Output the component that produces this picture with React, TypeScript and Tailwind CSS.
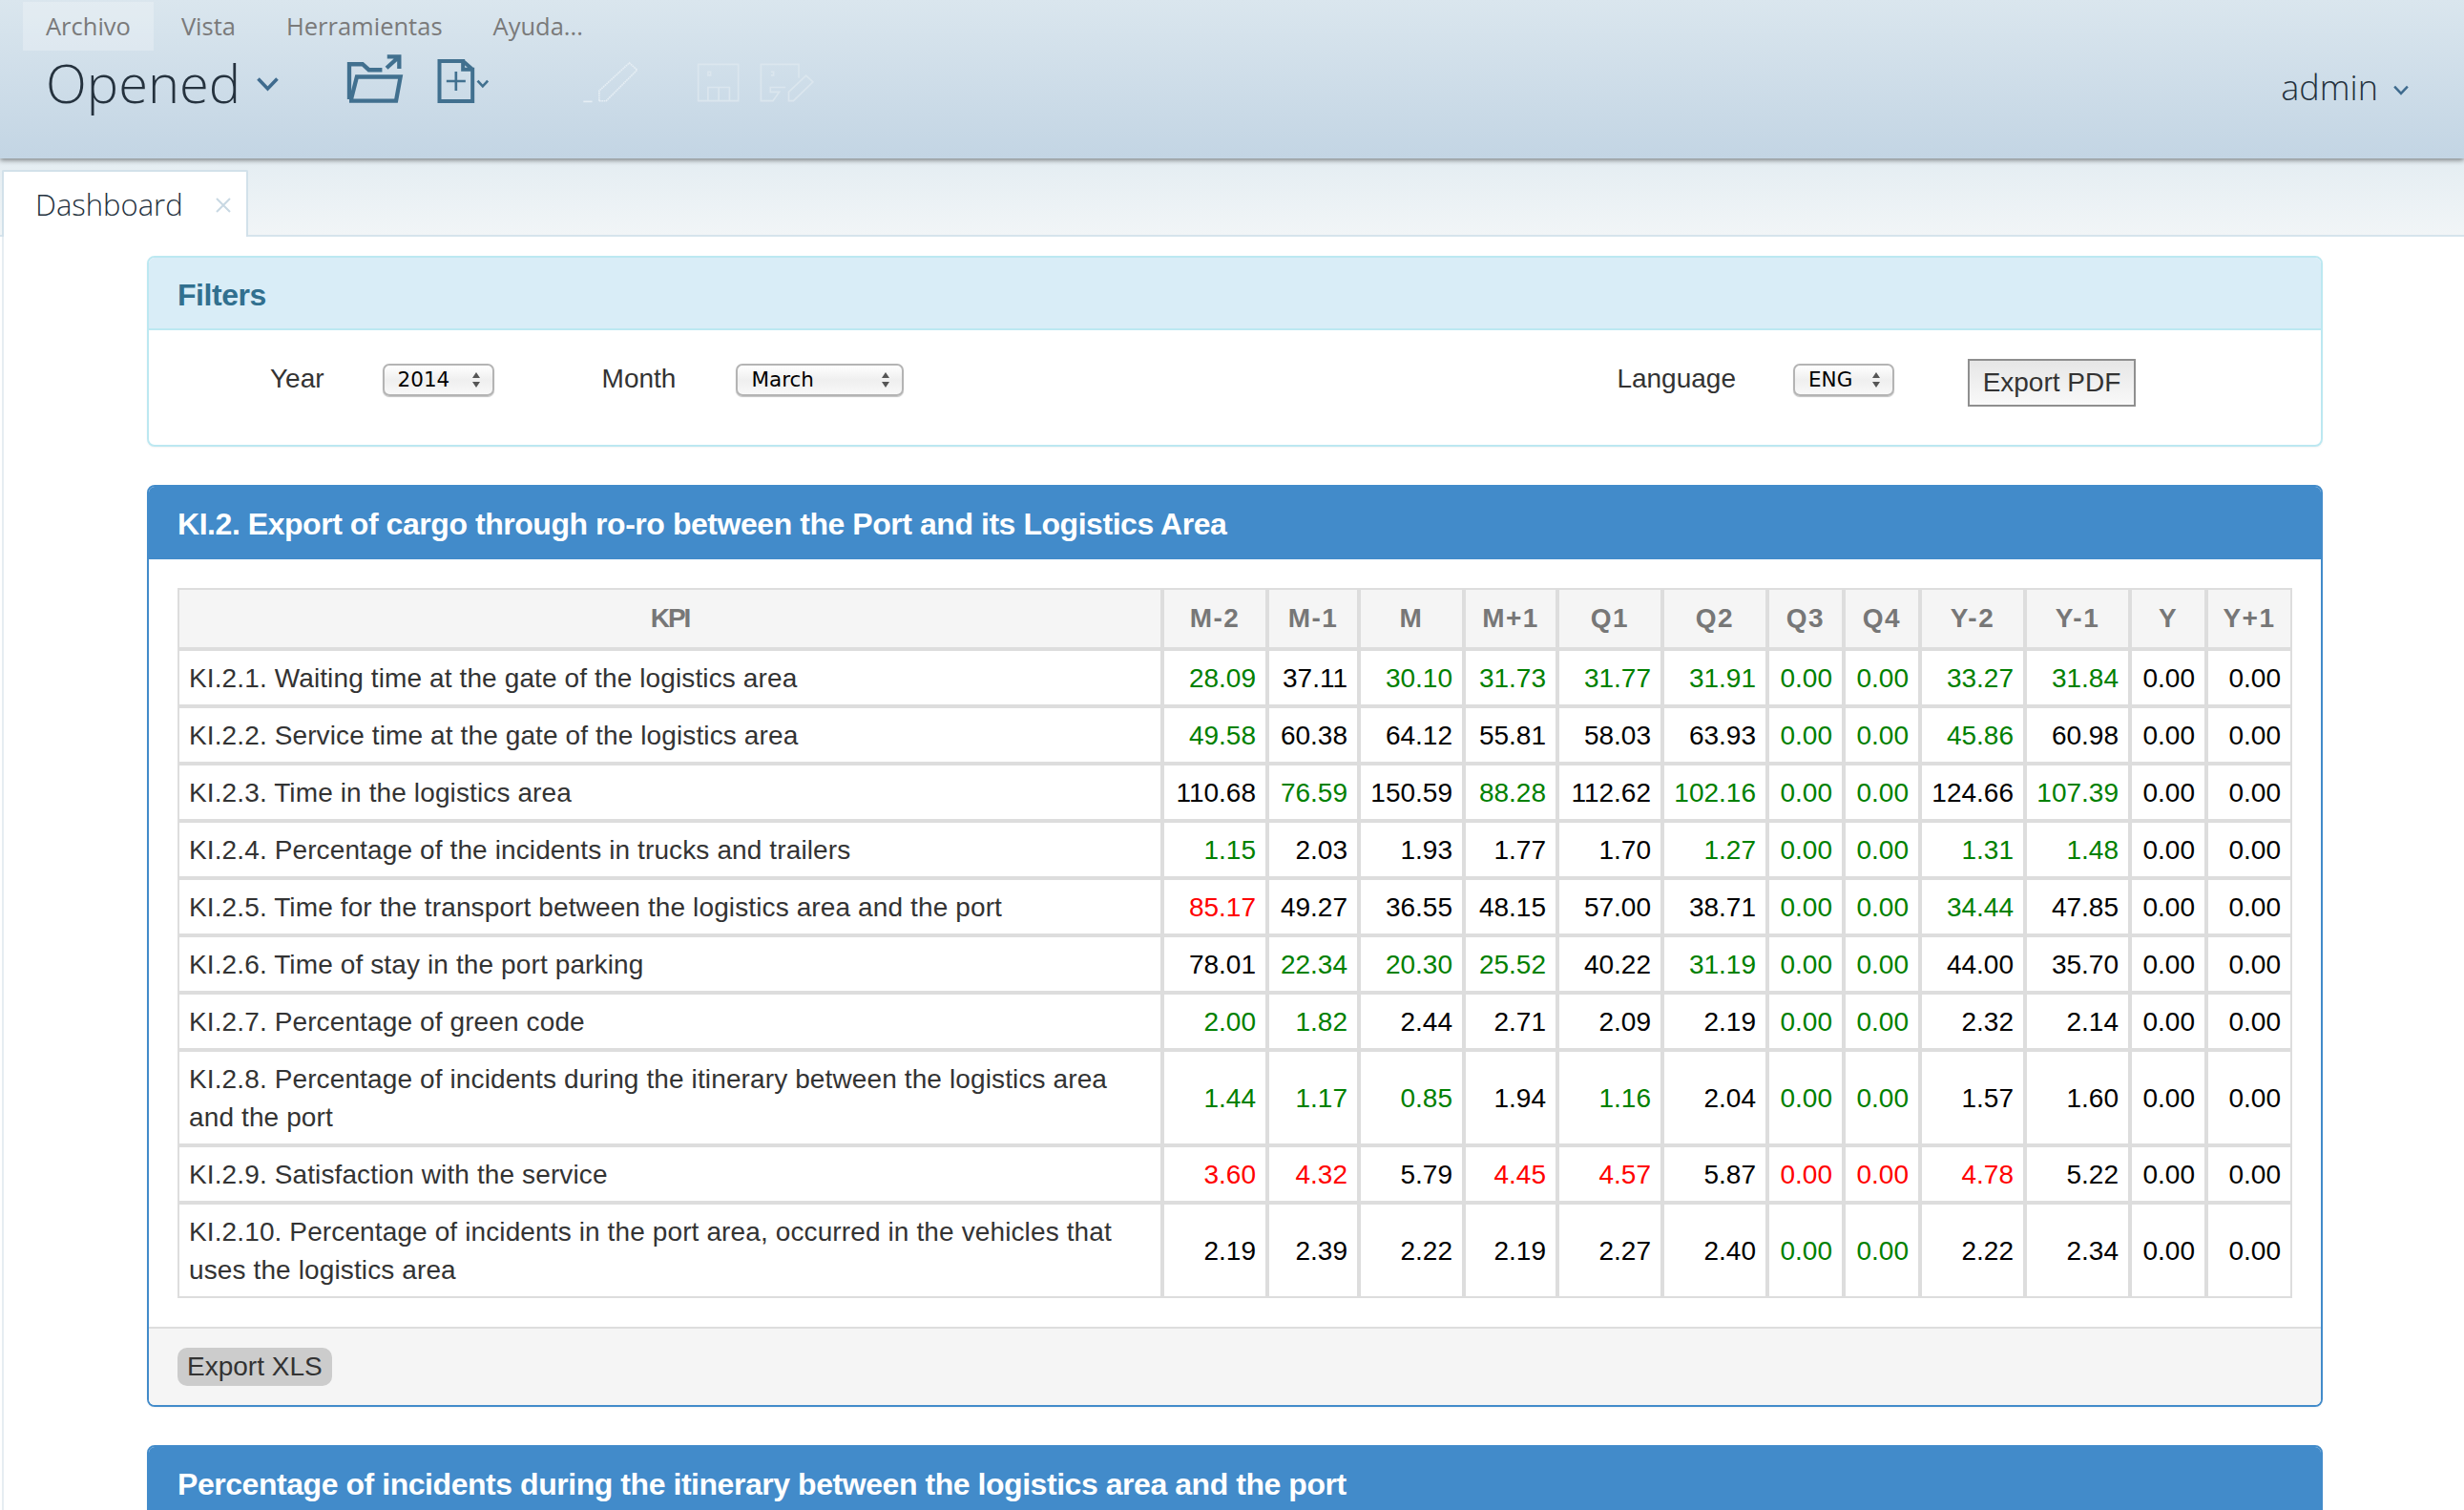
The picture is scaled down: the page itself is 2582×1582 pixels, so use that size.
import type { ReactNode } from "react";

const COLUMNS = ["M-2", "M-1", "M", "M+1", "Q1", "Q2", "Q3", "Q4", "Y-2", "Y-1", "Y", "Y+1"];

const COL_WIDTHS = [
  "w-[1032px]", "w-[110px]", "w-[96px]", "w-[110px]", "w-[98px]", "w-[110px]", "w-[110px]",
  "w-[80px]", "w-[80px]", "w-[110px]", "w-[110px]", "w-[80px]", "w-[86px]",
];

// g = green, r = red, no prefix = black
const ROWS: { label: string; values: string[] }[] = [
  { label: "KI.2.1. Waiting time at the gate of the logistics area", values: ["g28.09", "37.11", "g30.10", "g31.73", "g31.77", "g31.91", "g0.00", "g0.00", "g33.27", "g31.84", "0.00", "0.00"] },
  { label: "KI.2.2. Service time at the gate of the logistics area", values: ["g49.58", "60.38", "64.12", "55.81", "58.03", "63.93", "g0.00", "g0.00", "g45.86", "60.98", "0.00", "0.00"] },
  { label: "KI.2.3. Time in the logistics area", values: ["110.68", "g76.59", "150.59", "g88.28", "112.62", "g102.16", "g0.00", "g0.00", "124.66", "g107.39", "0.00", "0.00"] },
  { label: "KI.2.4. Percentage of the incidents in trucks and trailers", values: ["g1.15", "2.03", "1.93", "1.77", "1.70", "g1.27", "g0.00", "g0.00", "g1.31", "g1.48", "0.00", "0.00"] },
  { label: "KI.2.5. Time for the transport between the logistics area and the port", values: ["r85.17", "49.27", "36.55", "48.15", "57.00", "38.71", "g0.00", "g0.00", "g34.44", "47.85", "0.00", "0.00"] },
  { label: "KI.2.6. Time of stay in the port parking", values: ["78.01", "g22.34", "g20.30", "g25.52", "40.22", "g31.19", "g0.00", "g0.00", "44.00", "35.70", "0.00", "0.00"] },
  { label: "KI.2.7. Percentage of green code", values: ["g2.00", "g1.82", "2.44", "2.71", "2.09", "2.19", "g0.00", "g0.00", "2.32", "2.14", "0.00", "0.00"] },
  { label: "KI.2.8. Percentage of incidents during the itinerary between the logistics area and the port", values: ["g1.44", "g1.17", "g0.85", "1.94", "g1.16", "2.04", "g0.00", "g0.00", "1.57", "1.60", "0.00", "0.00"] },
  { label: "KI.2.9. Satisfaction with the service", values: ["r3.60", "r4.32", "5.79", "r4.45", "r4.57", "5.87", "r0.00", "r0.00", "r4.78", "5.22", "0.00", "0.00"] },
  { label: "KI.2.10. Percentage of incidents in the port area, occurred in the vehicles that uses the logistics area", values: ["2.19", "2.39", "2.22", "2.19", "2.27", "2.40", "g0.00", "g0.00", "2.22", "2.34", "0.00", "0.00"] },
];

function ValueCell({ raw }: { raw: string }) {
  const flag = raw[0];
  const color = flag === "g" ? "text-[#008000]" : flag === "r" ? "text-[#ff0000]" : "text-black";
  const text = flag === "g" || flag === "r" ? raw.slice(1) : raw;
  return (
    <td className={`border-r-4 border-b-4 border-[#ddd] pt-[9px] pb-[7px] px-[10px] text-right align-middle last:border-r-0 ${color}`}>
      {text}
    </td>
  );
}

function Chevron({ className }: { className: string }) {
  return (
    <svg viewBox="0 0 24 16" fill="none" stroke="#3f6b8e" strokeWidth="3.6" className={className}>
      <path d="M2 2.5 12 13 22 2.5" />
    </svg>
  );
}

function SelectBox({ value, width }: { value: string; width: string }) {
  return (
    <div className={`mt-[5px] flex h-[34px] items-center justify-between rounded-[7px] border-2 border-[#b4b4b4] bg-gradient-to-b from-white via-[#efefef] to-[#f8f8f8] pl-[14px] pr-[13px] font-['DejaVu_Sans',sans-serif] text-[21.5px] text-black shadow-[0_1px_1px_rgba(0,0,0,0.25)] ${width}`}>
      <span>{value}</span>
      <svg viewBox="0 0 8 16" className="h-[16px] w-[8px]" fill="#555">
        <path d="M4 0 8 6H0ZM0 10H8L4 16Z" />
      </svg>
    </div>
  );
}

function Panel({ title, tone, children }: { title: string; tone: "info" | "primary"; children?: ReactNode }) {
  const info = tone === "info";
  return (
    <section className={`rounded-lg border-2 bg-white shadow-[0_1px_2px_rgba(0,0,0,0.05)] ${info ? "border-[#bce8f1]" : "border-[#428bca]"}`}>
      <header className={`flex h-[76px] items-center rounded-t-md px-[30px] text-[32px] font-bold tracking-[-0.45px] ${info ? "border-b-2 border-[#bce8f1] bg-[#d9edf7] pt-[3px] text-[#31708f]" : "bg-[#428bca] pt-[1px] text-white"}`}>
        {title}
      </header>
      {children}
    </section>
  );
}

export default function App() {
  return (
    <div className="h-[1582px] w-[2582px] overflow-hidden bg-white font-['Liberation_Sans',Arial,sans-serif] text-[28px] leading-[40px] text-[#333]">
      {/* Top bar */}
      <div className="relative z-10 h-[166px] bg-gradient-to-b from-[#dae6ee] to-[#c3d5e4] shadow-[0_2px_5px_rgba(0,0,0,0.45)] font-['Open_Sans',sans-serif]">
        <nav className="flex h-[53px] gap-[5px] pl-[24px] pt-[2px] text-[25.5px] leading-[51px] text-[#7a7a7a]">
          <span className="bg-white/25 px-[24px]">Archivo</span>
          <span className="px-[24px]">Vista</span>
          <span className="px-[24px]">Herramientas</span>
          <span className="px-[24px]">Ayuda...</span>
        </nav>
        <div className="flex items-start pl-[48px] pr-[57px]">
          <span className="mt-px text-[56px] font-light leading-[64px] text-[#25323e]">Opened</span>
          <Chevron className="ml-[16px] mt-[27px] h-[16px] w-[25px]" />
          <svg viewBox="60 50 190 160" fill="none" stroke="#41708f" strokeWidth="13" className="ml-[67px] mt-[3px] h-[53px] w-[63px]">
            <path d="M78 195V84H120L140 102H182" />
            <path d="M78 200H226L240 124H102L84 195" />
            <path d="M196 96 234 62M198 60H236V98" />
          </svg>
          <svg viewBox="350 60 170 150" fill="none" stroke="#41708f" strokeWidth="12" className="ml-[34px] mt-[7px] h-[50px] w-[57px]">
            <path d="M360 72H434V98H464V198H360ZM434 72 464 98" />
            <path d="M382 135H442M412 105V165" strokeWidth="8" />
            <path d="M480 134 496 151 512 134" strokeWidth="8" />
          </svg>
          <svg viewBox="60 40 190 140" fill="none" stroke="#e6eef4" strokeWidth="5" strokeDasharray="5 2" className="ml-[94px] mt-[10px] h-[47px] w-[63px]">
            <path d="M120 168V136L215 48 240 70 142 168H118" />
            <path d="M70 170H98" strokeDasharray="none" />
          </svg>
          <svg viewBox="420 48 136 124" fill="none" stroke="#dbe6ee" strokeWidth="5" className="ml-[59px] mt-[13px] h-[41px] w-[45px]">
            <path d="M425 52H552V168H425ZM456 76H464V87H456ZM456 168V125H524V168M490 125V168" />
          </svg>
          <svg viewBox="618 48 172 124" fill="none" stroke="#dbe6ee" strokeWidth="5" className="ml-[21px] mt-[13px] h-[41px] w-[57px]">
            <path d="M742 95V52H622V168H660L680 140H652V125H700M654 76H662V87H654" />
            <path d="M710 168V140L765 88 787 108 725 168Z" />
          </svg>
          <div className="ml-auto mt-[14px] flex items-center">
            <span className="text-[36px] font-light leading-[50px] text-[#25323e]">admin</span>
            <Chevron className="ml-[15px] mt-[5px] h-[11px] w-[18px]" />
          </div>
        </div>
      </div>

      {/* Tab strip */}
      <div className="h-[82px] border-b-2 border-[#d6e4ec] bg-gradient-to-b from-[#e4edf2] to-[#f1f5f7] pl-[2px] pt-[12px] font-['Open_Sans',sans-serif]">
        <div className="flex h-[70px] w-[258px] items-center rounded-t-[2px] border-2 border-b-0 border-[#d2e1ea] bg-white pl-[33px]">
          <span className="text-[31px] font-light text-[#25323e]">Dashboard</span>
          <svg viewBox="0 0 18 18" stroke="#c8d8e3" strokeWidth="2" className="ml-[33px] mt-[2px] h-[18px] w-[18px]">
            <path d="M2 2 16 16M16 2 2 16" />
          </svg>
        </div>
      </div>

      {/* Content */}
      <main className="ml-[2px] flex flex-col gap-[40px] border-l-2 border-[#e6edf2] pl-[150px] pt-[20px]">
        <div className="w-[2280px]">
          <Panel title="Filters" tone="info">
            <div className="flex h-[120px] items-start pl-[127px] pt-[30px]">
              <span className="mt-px">Year</span>
              <span className="ml-[61px]"><SelectBox value="2014" width="w-[117px]" /></span>
              <span className="ml-[113px] mt-px">Month</span>
              <span className="ml-[63px]"><SelectBox value="March" width="w-[176px]" /></span>
              <span className="ml-[747px] mt-px">Language</span>
              <span className="ml-[60px]"><SelectBox value="ENG" width="w-[106px]" /></span>
              <button className="ml-[77px] h-[50px] w-[176px] border-2 border-[#8f8f8f] bg-gradient-to-b from-[#e6e6e6] to-[#f9f9f9] text-[#333]">
                Export PDF
              </button>
            </div>
          </Panel>
        </div>

        <div className="w-[2280px]">
          <Panel title="KI.2. Export of cargo through ro-ro between the Port and its Logistics Area" tone="primary">
            <div className="p-[30px]">
              <table className="w-[2216px] table-fixed border-separate border-spacing-0 border-2 border-[#ddd]">
                <colgroup>
                  {COL_WIDTHS.map((w, i) => (
                    <col key={i} className={w} />
                  ))}
                </colgroup>
                <thead>
                  <tr className="bg-[#f5f5f5] text-center font-bold text-[#777]">
                    <th className="border-r-4 border-b-4 border-[#ddd] py-[10px] tracking-[-2px]">KPI</th>
                    {COLUMNS.map((c) => (
                      <th key={c} className="border-r-4 border-b-4 border-[#ddd] py-[10px] tracking-[1.5px] last:border-r-0">{c}</th>
                    ))}
                  </tr>
                </thead>
                <tbody>
                  {ROWS.map((row) => (
                    <tr key={row.label} className="[&:last-child>td]:border-b-0">
                      <td className="border-r-4 border-b-4 border-[#ddd] pt-[9px] pb-[7px] px-[10px] align-middle tracking-[0.12px]">{row.label}</td>
                      {row.values.map((v, i) => (
                        <ValueCell key={i} raw={v} />
                      ))}
                    </tr>
                  ))}
                </tbody>
              </table>
            </div>
            <footer className="rounded-b-md border-t-2 border-[#ddd] bg-[#f5f5f5] px-[30px] py-[20px]">
              <button className="block h-[40px] rounded-[10px] bg-[#ccc] px-[10px] text-[#333]">Export XLS</button>
            </footer>
          </Panel>
        </div>

        <div className="w-[2280px]">
          <Panel title="Percentage of incidents during the itinerary between the logistics area and the port" tone="primary" />
        </div>
      </main>
    </div>
  );
}
